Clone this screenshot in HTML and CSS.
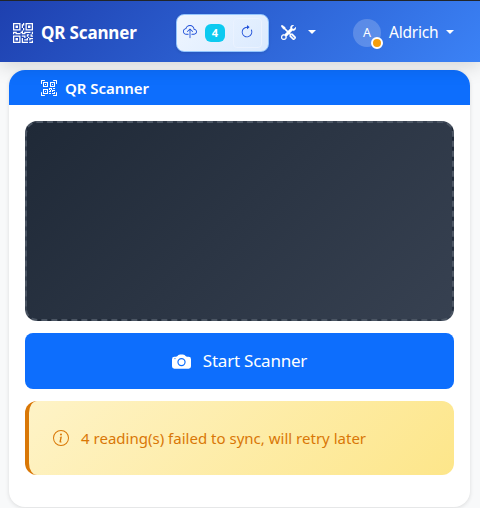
FILE: index.html
```html
<!DOCTYPE html>
<html lang="en">
<head>
<meta charset="utf-8">
<title>QR Scanner</title>
<link rel="stylesheet" href="styles.css">
</head>
<body>
<nav class="navbar">
  <div class="brand">
    <svg width="20" height="20" viewBox="0 0 16 16" fill="currentColor"><path d="M2 2h2v2H2z"/><path d="M6 0v6H0V0zM5 1H1v4h4zM4 12H2v2h2z"/><path d="M6 10v6H0v-6zm-5 1v4h4v-4zm11-9h2v2h-2z"/><path d="M10 0v6h6V0zm5 1v4h-4V1zM8 1V0h1v2H8v2H7V1zm0 5V4h1v2zM6 8V7h1V6h1v2h1V7h5v1h-4v1H7V8zm0 0v1H2V8H1v1H0V7h3v1zm10 1h-1V7h1zm-1 0h-1v2h2v-1h-1zm-4 0h2v1h-1v1h-1zm2 3v-1h-1v1h-1v1H9v1h3v-2zm0 0h3v1h-2v1h-1zm-4-1v1h1v-2H7v1z"/><path d="M7 12h1v3h4v1H7zm9 2v2h-3v-1h2v-1z"/></svg>
    <span class="brand-text">QR Scanner</span>
  </div>
  <div class="sync">
    <svg class="cloud" width="14" height="14" viewBox="0 0 16 16" fill="currentColor"><path d="M4.406 1.342A5.53 5.53 0 0 1 8 0c2.69 0 4.923 2 5.166 4.579C14.758 4.804 16 6.137 16 7.773 16 9.569 14.502 11 12.687 11H10a.5.5 0 0 1 0-1h2.688C13.979 10 15 8.988 15 7.773c0-1.216-1.02-2.228-2.313-2.228h-.5v-.5C12.188 2.825 10.328 1 8 1a4.53 4.53 0 0 0-2.941 1.1c-.757.652-1.153 1.438-1.153 2.055v.448l-.445.049C2.064 4.805 1 5.952 1 7.318 1 8.785 2.23 10 3.781 10H6a.5.5 0 0 1 0 1H3.781C1.708 11 0 9.366 0 7.318c0-1.763 1.266-3.223 2.942-3.593.143-.863.698-1.723 1.464-2.383"/><path d="M7.646 4.146a.5.5 0 0 1 .708 0l3 3a.5.5 0 0 1-.708.708L8.5 5.707V14.5a.5.5 0 0 1-1 0V5.707L5.354 7.854a.5.5 0 1 1-.708-.708z"/></svg>
    <span class="badge">4</span>
    <button class="refresh" aria-label="Retry sync"><svg width="14" height="14" viewBox="0 0 16 16" fill="currentColor"><path d="M8 3a5 5 0 1 0 4.546 2.914.5.5 0 0 1 .908-.417A6 6 0 1 1 8 2z"/><path d="M8 4.466V.534a.25.25 0 0 1 .41-.192l2.36 1.966c.12.1.12.284 0 .384L8.41 4.658A.25.25 0 0 1 8 4.466"/></svg></button>
  </div>
  <div class="tools">
    <svg width="15" height="15" viewBox="0 0 16 16" fill="currentColor" stroke="currentColor" stroke-width=".4"><path d="M1 0 0 1l2.2 3.081a1 1 0 0 0 .815.419h.07a1 1 0 0 1 .708.293l2.675 2.675-2.617 2.654A3.003 3.003 0 0 0 0 13a3 3 0 1 0 5.878-.851l2.654-2.617.968.968-.305.914a1 1 0 0 0 .242 1.023l3.27 3.27a.997.997 0 0 0 1.414 0l1.586-1.586a.997.997 0 0 0 0-1.414l-3.27-3.27a1 1 0 0 0-1.023-.242L10.5 9.5l-.96-.96 2.68-2.643A3.005 3.005 0 0 0 16 3q0-.405-.102-.777l-2.14 2.141L12 4l-.364-1.757L13.777.102a3 3 0 0 0-3.675 3.68L7.462 6.46 4.793 3.793a1 1 0 0 1-.293-.707v-.071a1 1 0 0 0-.419-.814zm9.646 10.646a.5.5 0 0 1 .708 0l2.914 2.915a.5.5 0 0 1-.707.707l-2.915-2.914a.5.5 0 0 1 0-.708M3 11l.471.242.529.026.287.445.445.287.026.529L5 13l-.242.471-.026.529-.445.287-.287.445-.529.026L3 15l-.471-.242L2 14.732l-.287-.445L1.268 14l-.026-.529L1 13l.242-.471.026-.529.445-.287.287-.445.529-.026z"/></svg>
    <span class="caret"></span>
  </div>
  <div class="user">
    <span class="avatar">A<span class="status"></span></span>
    <span class="user-name">Aldrich</span>
    <span class="caret"></span>
  </div>
</nav>
<main class="card">
  <header class="card-header">
    <svg width="16" height="16" viewBox="0 0 16 16" fill="currentColor"><path d="M0 .5A.5.5 0 0 1 .5 0h3a.5.5 0 0 1 0 1H1v2.5a.5.5 0 0 1-1 0zm12 0a.5.5 0 0 1 .5-.5h3a.5.5 0 0 1 .5.5v3a.5.5 0 0 1-1 0V1h-2.5a.5.5 0 0 1-.5-.5M.5 12a.5.5 0 0 1 .5.5V15h2.5a.5.5 0 0 1 0 1h-3a.5.5 0 0 1-.5-.5v-3a.5.5 0 0 1 .5-.5m15 0a.5.5 0 0 1 .5.5v3a.5.5 0 0 1-.5.5h-3a.5.5 0 0 1 0-1H15v-2.5a.5.5 0 0 1 .5-.5M4 4h1v1H4z"/><path d="M7 2H2v5h5zM3 3h3v3H3zm2 8H4v1h1z"/><path d="M7 9H2v5h5zm-4 1h3v3H3zm8-6h1v1h-1z"/><path d="M9 2h5v5H9zm1 1v3h3V3zM8 8v2h1v1H8v1h2v-2h1v2h1v-1h2v-1h-3V8zm2 2H9V9h1zm4 2h-1v1h-2v1h3zm-4 2v-1H8v1z"/><path d="M12 9h2V8h-2z"/></svg>
    <span class="card-title">QR Scanner</span>
  </header>
  <div class="card-body">
    <div class="viewport"></div>
    <button class="start">
      <svg width="19" height="19" viewBox="0 0 16 16" fill="currentColor"><path d="M10.5 8.5a2.5 2.5 0 1 1-5 0 2.5 2.5 0 0 1 5 0"/><path d="M2 4a2 2 0 0 0-2 2v6a2 2 0 0 0 2 2h12a2 2 0 0 0 2-2V6a2 2 0 0 0-2-2h-1.172a2 2 0 0 1-1.414-.586l-.828-.828A2 2 0 0 0 9.172 2H6.828a2 2 0 0 0-1.414.586l-.828.828A2 2 0 0 1 3.172 4zm.5 2a.5.5 0 1 1 0-1 .5.5 0 0 1 0 1m9 2.5a3.5 3.5 0 1 1-7 0 3.5 3.5 0 0 1 7 0"/></svg>
      <span class="start-text">Start Scanner</span>
    </button>
    <div class="alert">
      <svg width="16" height="16" viewBox="0 0 16 16" fill="currentColor"><path d="M8 15A7 7 0 1 1 8 1a7 7 0 0 1 0 14m0 1A8 8 0 1 0 8 0a8 8 0 0 0 0 16"/><path d="m8.93 6.588-2.29.287-.082.38.45.083c.294.07.352.176.288.469l-.738 3.468c-.194.897.105 1.319.808 1.319.545 0 1.178-.252 1.465-.598l.088-.416c-.2.176-.492.246-.686.246-.275 0-.375-.193-.304-.533zM9 4.5a1 1 0 1 1-2 0 1 1 0 0 1 2 0"/></svg>
      <span class="alert-text">4 reading(s) failed to sync, will retry later</span>
    </div>
  </div>
</main>
</body>
</html>
```
FILE: styles.css
```css
* { box-sizing: border-box; }
body {
  margin: 0;
  height: 508px;
  overflow: hidden;
  background: #f8f9fa;
  font-family: "Noto Sans", "Open Sans", sans-serif;
  font-size: 15px;
  line-height: 24px;
  white-space: nowrap;
}
svg { display: block; flex: none; }
button { font: inherit; padding: 0; }
.navbar {
  position: relative;
  display: flex;
  align-items: center;
  height: 62px;
  padding: 2px 26px 0 13px;
  border-top: 1px solid #212529;
  background: linear-gradient(135deg, #1e40af 0%, #3b82f6 100%);
  box-shadow: 0 4px 20px rgba(0, 0, 0, .15);
  color: #fff;
}
.brand { display: flex; align-items: center; gap: 8px; width: 163px; padding-top: 1px; }
.brand-text { font-size: 17px; font-weight: 700; letter-spacing: -.15px; }
.sync {
  display: flex;
  align-items: center;
  width: 93px;
  height: 38px;
  padding-left: 6px;
  border: 1px solid #93c5fd;
  border-radius: 8px;
  background: linear-gradient(135deg, #eff6ff, #dbeafe);
  box-shadow: 0 1px 3px rgba(0, 0, 0, .1);
  color: #1d4ed8;
}
.cloud { margin-top: -2px; }
.badge {
  width: 20px;
  height: 18px;
  margin-left: 8px;
  border-radius: 6px;
  background: #0dcaf0;
  color: #fff;
  font-size: 11px;
  font-weight: 700;
  line-height: 18px;
  text-align: center;
}
.refresh {
  display: flex;
  align-items: center;
  justify-content: center;
  width: 29px;
  height: 30px;
  margin-left: 8px;
  padding-right: 1px;
  padding-bottom: 1px;
  border: 1px solid #eaf2ff;
  border-radius: 4px;
  background: none;
  color: #1d4ed8;
}
.tools { display: flex; align-items: center; gap: 12px; margin-left: 12px; padding-bottom: 1px; }
.caret {
  border-top: 4px solid;
  border-left: 4px solid transparent;
  border-right: 4px solid transparent;
}
.user { display: flex; align-items: center; margin-left: auto; }
.user .caret { margin-bottom: 2px; }
.avatar {
  position: relative;
  width: 28px;
  height: 28px;
  border-radius: 50%;
  background: rgba(255, 255, 255, .2);
  font-size: 12.5px;
  line-height: 28px;
  text-align: center;
}
.status {
  position: absolute;
  right: -2px;
  bottom: -2px;
  width: 12px;
  height: 12px;
  border: 2px solid #fff;
  border-radius: 50%;
  background: #f59e0b;
}
.user-name { width: 49px; margin: 0 8px; padding-bottom: 1px; font-size: 15.5px; letter-spacing: -.2px; }
.card {
  height: 437px;
  margin: 8px 10px 0 9px;
  border-radius: 16px;
  background: #fff;
  box-shadow: 0 1px 4px rgba(0, 0, 0, .12);
}
.card-header {
  display: flex;
  align-items: center;
  gap: 8px;
  height: 35px;
  padding: 1px 32px 0;
  border-radius: 16px 16px 0 0;
  background: #0d6efd;
  color: #fff;
}
.card-title { font-size: 15px; font-weight: 600; letter-spacing: -.03px; }
.card-body { display: flex; flex-direction: column; gap: 12px; padding: 16px; }
.viewport {
  height: 200px;
  border: 2px dashed #4b5563;
  border-radius: 12px;
  background: linear-gradient(135deg, #1f2937, #374151);
}
.start {
  display: flex;
  align-items: center;
  justify-content: center;
  gap: 12px;
  height: 56px;
  border: 0;
  border-radius: 8px;
  background: #0d6efd;
  color: #fff;
}
.start-text { font-size: 17px; letter-spacing: -.22px; }
.alert {
  display: flex;
  align-items: center;
  gap: 12px;
  height: 74px;
  padding-left: 24px;
  border-left: 4px solid #d97706;
  border-radius: 12px;
  background: linear-gradient(135deg, #fef3c7, #fde68a);
  color: #d97706;
}
.alert-text { font-size: 15px; letter-spacing: .01px; }
```
